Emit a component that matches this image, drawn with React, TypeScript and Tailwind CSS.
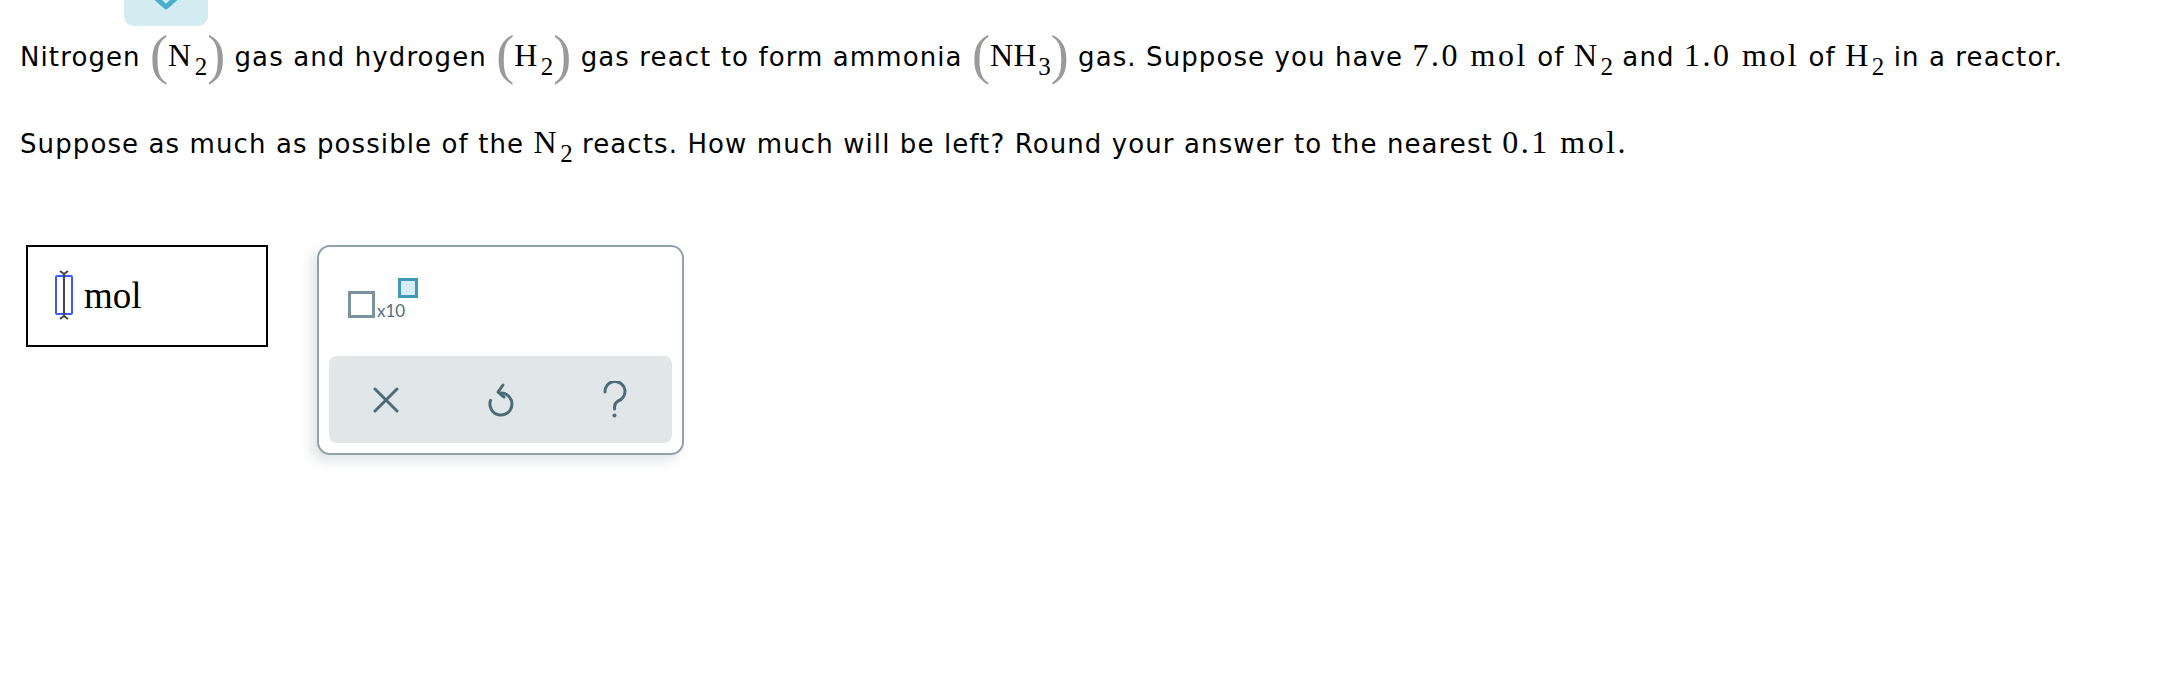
import React from "react"

const sans = "font-['DejaVu_Sans','Verdana',sans-serif]"
const serif = "font-['Liberation_Serif','Times_New_Roman',serif]"

function M({ children, tight }: { children: React.ReactNode; tight?: boolean }) {
  return (
    <span className={`${serif} text-[32px] ${tight ? "tracking-[0.5px]" : "tracking-[2.5px]"}`}>{children}</span>
  )
}

function Sub({ children }: { children: React.ReactNode }) {
  return <span className={`${serif} text-[25px] align-[-9px] tracking-normal ml-[1px]`}>{children}</span>
}

function Paren({ children }: { children: React.ReactNode }) {
  const p = `${serif} text-[54px] leading-none align-[-7px] text-[#9a9a9a] tracking-normal`
  return (
    <span className="tracking-normal">
      <span className={p}>(</span>
      {children}
      <span className={p}>)</span>
    </span>
  )
}

export default function App() {
  return (
    <div className={`w-[2174px] h-[698px] bg-white text-black ${sans}`}>
      {/* collapse tab */}
      <div className="ml-[124px] w-[84px] h-[26px] rounded-b-[10px] bg-[#d3ecf2] flex justify-center overflow-hidden">
        <svg width="24" height="12" viewBox="0 0 24 12" className="-mt-[2px]">
          <path d="M2 0 L12 9 L22 0" fill="none" stroke="#4aaecb" strokeWidth="5" strokeLinejoin="round" />
        </svg>
      </div>

      <div className="pl-[20px] pr-[20px] text-[26px] tracking-[1.1px] leading-[50px] mt-[2px] whitespace-nowrap">
        Nitrogen <Paren><M>N</M><Sub>2</Sub></Paren> gas and hydrogen <Paren><M>H</M><Sub>2</Sub></Paren> gas react to form
        ammonia <Paren><M tight>NH</M><Sub>3</Sub></Paren> gas. Suppose you have <M>7.0 mol</M> of <M>N</M><Sub>2</Sub> and{" "}
        <M>1.0 mol</M> of <M>H</M><Sub>2</Sub> in a reactor.
      </div>

      <div className="pl-[20px] text-[26px] tracking-[1.1px] leading-[50px] mt-[25px] whitespace-nowrap">
        Suppose as much as possible of the <M>N</M><Sub>2</Sub> reacts. How much will be left? Round your answer to the
        nearest <M>0.1 mol.</M>
      </div>

      <div className="flex items-start gap-[49px] ml-[26px] mt-[66px]">
        {/* answer box */}
        <div className="w-[242px] h-[102px] border-2 border-black flex items-start pt-[24px] pl-[26px]">
          <div className="flex items-center">
            <div className="relative w-[20px] h-[48px] flex items-center justify-center">
              <div className="w-[18px] h-[40px] border-2 border-[#3b5bff] rounded-[2px]" />
              <svg width="14" height="50" viewBox="0 0 14 50" className="absolute left-[3px] top-[-1px]">
                <path d="M3 1 L7 4 L11 1 M7 4 V46 M3 49 L7 46 L11 49" fill="none" stroke="#444" strokeWidth="2" />
              </svg>
            </div>
            <span className={`${serif} text-[37px] ml-[10px] leading-none`}>mol</span>
          </div>
        </div>

        {/* keypad */}
        <div className="w-[367px] h-[210px] border-2 border-[#8fa3ad] rounded-[13px] bg-white shadow-[-6px_6px_12px_rgba(60,80,90,0.15)] flex flex-col">
          <div className="flex-1 pl-[29px] pt-[31px]">
            <div className="flex items-start">
              <div className="w-[27px] h-[27px] border-[3px] border-[#7a939e] mt-[13px]" />
              <span className="font-['Lato',sans-serif] text-[17px] text-[#54707c] mt-[24px] ml-[2px] leading-none">x10</span>
              <div className="w-[20px] h-[20px] border-[3px] border-[#3e9ab5] bg-[#d5eef3] -ml-[7px]" />
            </div>
          </div>
          <div className="mx-[10px] mb-[10px] h-[87px] rounded-[8px] bg-[#e1e6e9] flex items-center justify-between px-[44px]">
            <svg width="26" height="26" viewBox="0 0 26 26">
              <path d="M2 2 L24 24 M24 2 L2 24" stroke="#4c6b78" strokeWidth="3" strokeLinecap="round" />
            </svg>
            <svg width="28" height="36" viewBox="0 0 28 36">
              <path d="M14 11 A11 11 0 1 1 3.5 18.5" fill="none" stroke="#4c6b78" strokeWidth="3" strokeLinecap="round" />
              <path d="M16 3 L11 10 L17 15" fill="none" stroke="#4c6b78" strokeWidth="3" strokeLinecap="round" strokeLinejoin="round" />
            </svg>
            <svg width="26" height="38" viewBox="0 0 26 38">
              <path d="M3 11 A10 10 0 1 1 16 20 C13.5 21.5 12.5 23 12.5 26 V28" fill="none" stroke="#4c6b78" strokeWidth="3" strokeLinecap="round" />
              <circle cx="12.5" cy="34.5" r="2" fill="#4c6b78" />
            </svg>
          </div>
        </div>
      </div>
    </div>
  )
}
